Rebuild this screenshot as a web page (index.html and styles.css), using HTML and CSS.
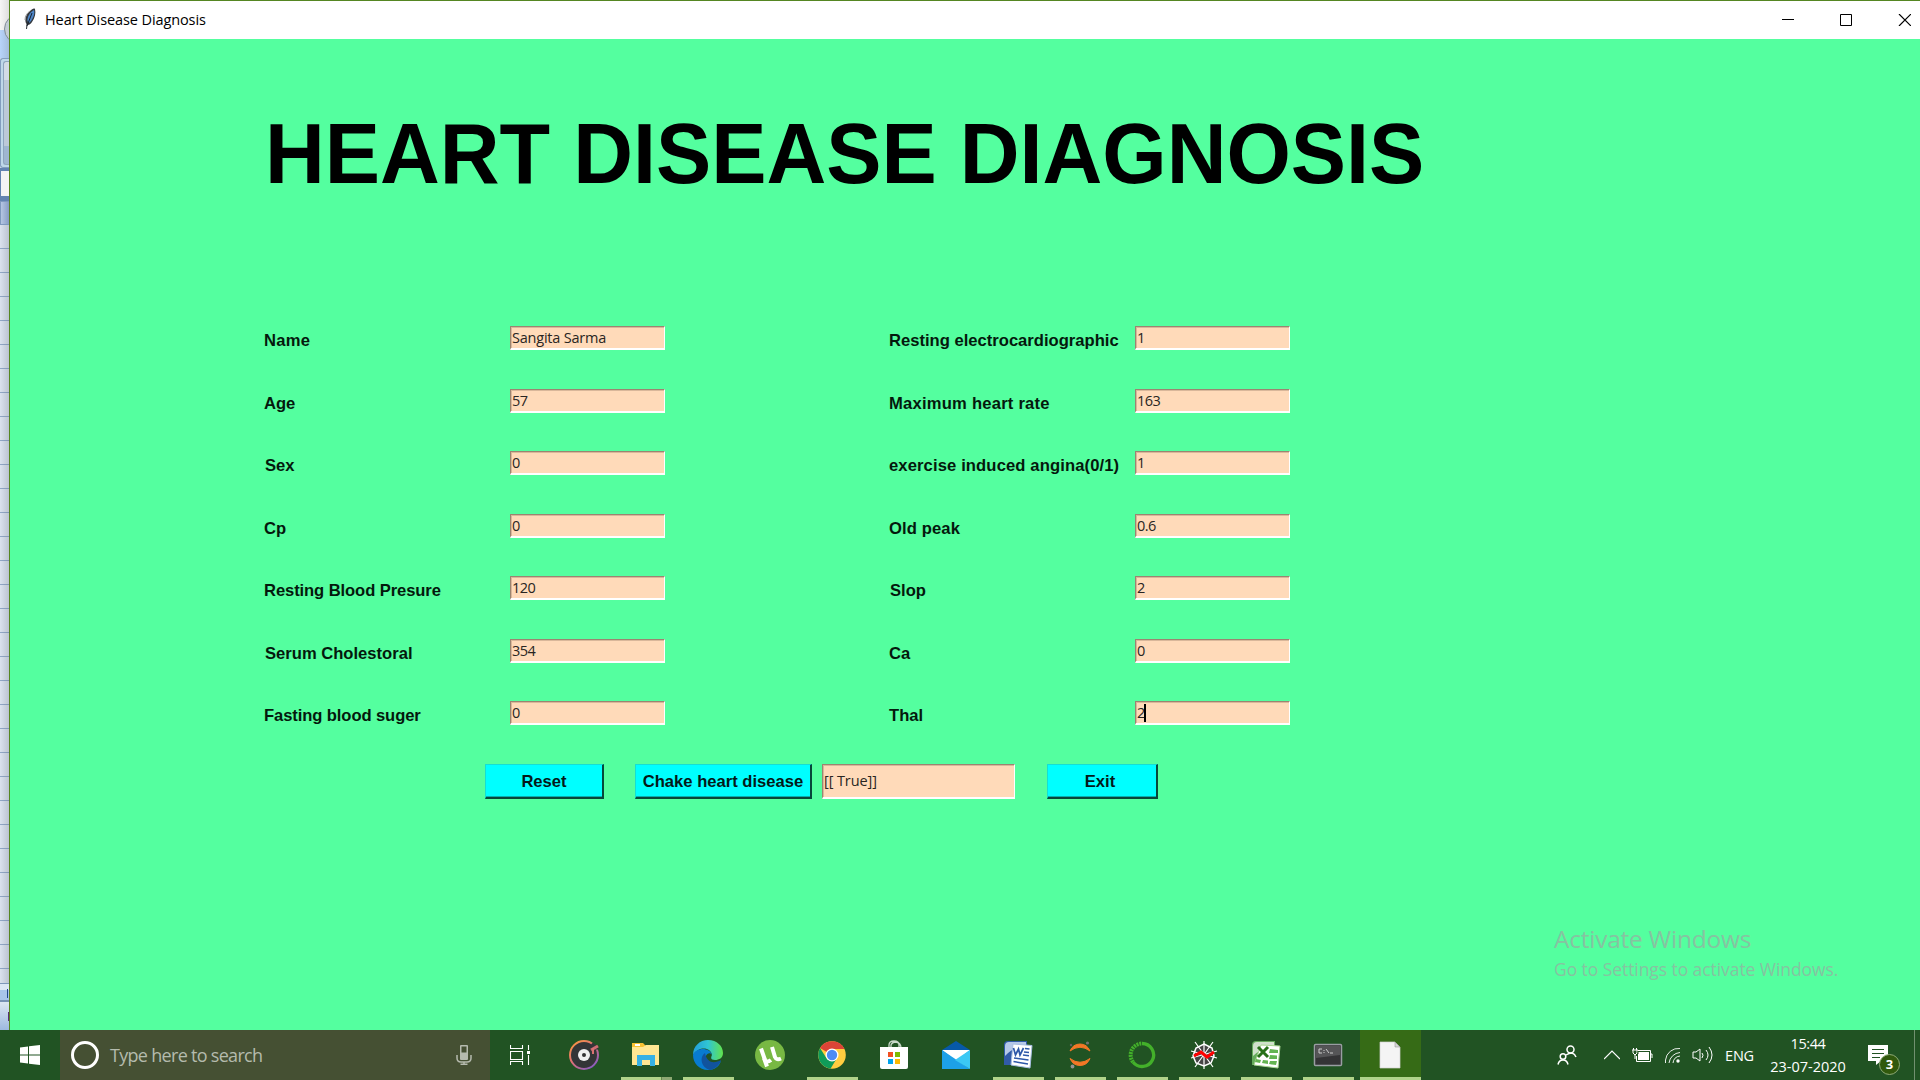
FILE: index.html
```html
<!DOCTYPE html>
<html lang="en">
<head>
<meta charset="utf-8">
<title>Heart Disease Diagnosis</title>
<link rel="stylesheet" href="styles.css">
</head>
<body>
<div class="desktop">
  <div class="workspace">
    <div class="behind">
      <div class="behind-caption"><span class="orb"></span></div>
      <div class="behind-tabs"></div>
      <div class="behind-ribbon"><span class="behind-group"></span></div>
      <div class="behind-formula"></div>
      <div class="behind-corner"></div>
      <div class="behind-rows"></div>
      <div class="behind-sheets"><span class="mark-blue"></span></div>
      <div class="behind-status"><span class="mark-purple"></span></div>
    </div>
    <main class="window">
      <header class="titlebar">
        <svg class="feather" viewBox="0 0 14 22"><path d="M3 21L3.500 16C1 12 3 6 7 3C9 1 11 0 12 1C13 5 12 10 9 14C7 17 5 17 4.500 17L4 21Z" fill="#34383d"/><path d="M4.500 13C4 9 7 4 11 2C12 6 10 10 8 13L6 15Z" fill="#4d86c9"/><path d="M9 5L4 18" stroke="#16202c" stroke-width="1" fill="none"/><path d="M2 12C2 8 4 5 7 3" stroke="#999" fill="none"/></svg>
        <span class="title">Heart Disease Diagnosis</span>
        <svg class="controls" viewBox="0 0 129 12"><path d="M0 5.500H12M58.500 .5H69.500V11.500H58.500Z" fill="none" stroke="#000"/><path d="M117 0L129 12M129 0L117 12" fill="none" stroke="#000" stroke-width="1.200"/></svg>
      </header>
      <section class="client">
        <h1 class="heading">HEART DISEASE DIAGNOSIS</h1>
        <div class="form">
          <span class="label wide">Name</span><span class="entry words">Sangita Sarma</span><span class="label">Resting electrocardiographic</span><span class="entry">1</span>
          <span class="label">Age</span><span class="entry">57</span><span class="label wide">Maximum heart rate</span><span class="entry">163</span>
          <span class="label inset">Sex</span><span class="entry">0</span><span class="label roomy">exercise induced angina(0/1)</span><span class="entry">1</span>
          <span class="label">Cp</span><span class="entry">0</span><span class="label roomy">Old peak</span><span class="entry">0.6</span>
          <span class="label tight">Resting Blood Presure</span><span class="entry">120</span><span class="label inset">Slop</span><span class="entry">2</span>
          <span class="label inset">Serum Cholestoral</span><span class="entry">354</span><span class="label">Ca</span><span class="entry">0</span>
          <span class="label tight">Fasting blood suger</span><span class="entry">0</span><span class="label">Thal</span><span class="entry">2<i class="caret"></i></span>
        </div>
        <div class="actions">
          <span class="button reset">Reset</span>
          <span class="button check">Chake heart disease</span>
          <span class="entry result">[[ True]]</span>
          <span class="button exit">Exit</span>
        </div>
        <aside class="watermark"><div class="wm-title">Activate Windows</div><div class="wm-text">Go to Settings to activate Windows.</div></aside>
      </section>
    </main>
  </div>

  <footer class="taskbar">
    <div class="start"><svg width="20" height="20" viewBox="0 0 20 20"><path fill="#fff" d="M0 2.600L8 1.500V9.500H0ZM9 1.300L20 0V9.500H9ZM0 10.500H8V18.500L0 17.400ZM9 10.500H20V20L9 18.700Z"/></svg></div>
    <div class="search">
      <span class="ring"></span><span class="placeholder">Type here to search</span>
      <svg class="mic" width="16" height="20" viewBox="0 0 16 20"><rect x="4" y="0" width="8" height="15" rx="1" fill="#b5baae"/><rect x="5.500" y="1.500" width="5" height="6" fill="#454f33"/><path d="M1 10V13Q1 17 5 17H11Q15 17 15 13V10M8 17V19.500M4.500 19.300H11.500" fill="none" stroke="#b5baae" stroke-width="1.500"/></svg>
    </div>
    <div class="taskview"><svg width="20" height="20" viewBox="0 0 20 20"><path d="M.5 0V3.500H12.500V0M.5 20V16.500H12.500V20M.5 6.500H12.500V14.500H.5ZM18.500 0V5M18.500 10V20" fill="none" stroke="#fff" stroke-width="1.100"/><rect x="17" y="6" width="3" height="3" fill="#fff"/></svg></div>
    <div class="apps">
      <div class="app"><svg viewBox="0 0 30 30"><defs><linearGradient id="gr" x1="0" y1="0" x2=".8" y2="1"><stop offset="0" stop-color="#ff9b38"/><stop offset=".5" stop-color="#dc7078"/><stop offset="1" stop-color="#845bc2"/></linearGradient></defs><circle cx="15" cy="15" r="14" fill="#333537" stroke="url(#gr)" stroke-width="2"/><path d="M23 3.500L29 9" stroke="#333537" stroke-width="3"/><path d="M22 10L29 6" stroke="#cf6d73" stroke-width="3"/><path d="M24 8V14" stroke="#d97272" stroke-width="2"/><circle cx="15" cy="15" r="6" fill="#f0f0f0"/><circle cx="15" cy="15" r="2" fill="#333"/></svg></div>
      <div class="app run multi"><svg viewBox="0 0 30 30"><path d="M1 3H12L15 6H28V25H1Z" fill="#f7c234"/><path d="M1 7H12L15 5H28V25H1Z" fill="#ffe793"/><path d="M4 4H9V6H4Z" fill="#fff"/><path d="M6 15H24V26H19V20H11V26H6Z" fill="#36b1e5"/></svg></div>
      <div class="app run"><svg viewBox="0 0 30 30"><defs><linearGradient id="e1"><stop offset="0" stop-color="#229dd9"/><stop offset=".5" stop-color="#30c5d3"/><stop offset="1" stop-color="#62e34c"/></linearGradient></defs><path d="M0 15C0 6 7 0 15 0C24 0 30 6 30 13C30 18 26 20 22 20C17 20 18 17 19 15C18 8 7 5 0 15Z" fill="url(#e1)"/><path d="M0 15C3 7 17 7 19 15C16 10 10 17 13 22C16 26 23 26 28 21C26 27 21 30 15 30C6 30 0 23 0 15Z" fill="#087bd0"/><path d="M12 13C6 17 8 28 17 30C22 29 27 25 28 20C21 24 14 23 12 13Z" fill="#11539d"/></svg></div>
      <div class="app"><svg viewBox="0 0 30 30"><circle cx="15" cy="15" r="15" fill="#78b843"/><path d="M6 8.500L10 20Q12 23 16 20" fill="none" stroke="#fff" stroke-width="4"/><path d="M9 18L12 26.500M17 7L20 17Q21.500 20.500 26 18.500" fill="none" stroke="#fff" stroke-width="4"/></svg></div>
      <div class="app run"><svg viewBox="0 0 30 30"><circle cx="15" cy="15" r="13.800" fill="#ffcd40"/><path d="M15 15L3 8A14 14 0 0 1 27.500 9H15Z" fill="#db4437"/><path d="M3 8A14 14 0 0 0 13.500 28.700L20 18L10 19Z" fill="#109b59"/><circle cx="15" cy="15" r="6.500" fill="#fff"/><circle cx="15" cy="15" r="5.200" fill="#4c8bf5"/></svg></div>
      <div class="app"><svg viewBox="0 0 30 30"><path d="M10 8V5Q10 1 15 1Q20 1 20 5V8M12 8V5Q13 2 17 2Q22 3 22 8" fill="none" stroke="#c9d8c9" stroke-width="1.300"/><path d="M1 7H29V27Q29 29 27 29H3Q1 29 1 27Z" fill="#fff"/><path d="M9 12H14V17H9Z" fill="#f25022"/><path d="M16 12H21V17H16Z" fill="#7fba00"/><path d="M9 19H14V24H9Z" fill="#00a4ef"/><path d="M16 19H21V24H16Z" fill="#ffb900"/></svg></div>
      <div class="app"><svg viewBox="0 0 30 30"><path d="M1 10L15 1L29 10V20H1Z" fill="#0759a8"/><path d="M1 10H29L15 21Z" fill="#fff"/><path d="M1 10L29 29H1Z" fill="#1da1e8"/><path d="M29 10V29L14 20Z" fill="#3bc8f4"/></svg></div>
      <div class="app run"><svg viewBox="0 0 30 30"><path d="M5 1H24V25H1V5Q1 1 5 1Z" fill="#315ba8"/><path d="M6 2H23V6Q10 7 2 16V6Q2 2 6 2Z" fill="#b5c8e8"/><path d="M10 4L29 5.500L27 28L8 25Z" fill="#fff" stroke="#a7bde0"/><path d="M10.500 8L12.500 15L15.500 9L17 15L20.500 8" fill="none" stroke="#2e58a8" stroke-width="1.700"/><path d="M22 8.500L26.500 9M21 12L26 12.500M20 15L26 15.800M11 18L25.500 20M10.500 21.500L25 24" stroke="#2e58a8" stroke-width="1.500"/></svg></div>
      <div class="app run"><svg viewBox="0 0 30 30"><path d="M5 11Q8 4 15 4Q22 4 25 11Q15 3.500 5 11ZM5 18.500Q8 25.500 15 25.500Q22 25.500 25 18.500Q15 26 5 18.500Z" fill="#f37726" stroke="#f37726" stroke-width="1"/><circle cx="22.500" cy="3" r="1.600" fill="#717371"/><circle cx="7.500" cy="26.500" r="1.900" fill="#929292"/><circle cx="6" cy="5" r="1.200" fill="#616262"/></svg></div>
      <div class="app run"><svg viewBox="0 0 30 30"><path d="M15 3.500A11.500 11.500 0 1 1 6 22" fill="none" stroke="#43b02a" stroke-width="3.300"/><path d="M6 22A11.500 11.500 0 0 1 15 3.500" fill="none" stroke="#43b02a" stroke-width="4" stroke-dasharray="2 .8"/></svg></div>
      <div class="app run"><svg viewBox="0 0 30 30"><path d="M15 4L23 8L25 16L22 23L15 26L7 23L4 16L7 8Z" fill="#444" stroke="#fff" stroke-width="1.500"/><path d="M15 1V29M6 2L24 27M24 2L6 27M2 11L28 18M28 11L2 18" fill="none" stroke="#fff" stroke-width="1.200"/><path d="M5 16L12 12L18 17L25 12" fill="none" stroke="#f00" stroke-width="3"/></svg></div>
      <div class="app run"><svg viewBox="0 0 30 30"><path d="M5 1H24V25H1V5Q1 1 5 1Z" fill="#65ab5c"/><path d="M6 2H23V7Q10 8 2 16V6Q2 2 6 2Z" fill="#d0e1cb"/><path d="M10 5L29 6L27 28L3 25Z" fill="#fff" stroke="#a6d590"/><path d="M7 7L17 17M17 7L7 17" stroke="#287119" stroke-width="3"/><path d="M19 9L27 10V13H18ZM19 15L26 15.500V19H18ZM12 20L17 20.500V24L11 23ZM19 21H26L25 25L18 24ZM5 19L10 20L9 23L4 22Z" fill="#64b452"/></svg></div>
      <div class="app run"><svg viewBox="0 0 30 30"><rect x="1.500" y="4.500" width="27" height="21" rx="1" fill="#343436" stroke="#999da2" stroke-width="1.500"/><path d="M3 6H27V15L3 18Z" fill="#555557"/><path d="M9 9H6V13H9M11 10V11M11 12V13M13 9L16 13M17 13H20" stroke="#ccc" fill="none"/></svg></div>
      <div class="app run active"><svg viewBox="0 0 30 30"><path d="M5 2H20L25 7V28H5Z" fill="#f4f4f4" stroke="#d1d1d1" stroke-width=".7"/><path d="M20 2V7H25Z" fill="#d6d6d6" stroke="#888" stroke-width=".5"/></svg></div>
    </div>
    <div class="tray">
      <div class="t-people"><svg width="20" height="20" viewBox="0 0 20 20"><g fill="none" stroke="#fff" stroke-width="1.500"><circle cx="13.500" cy="4.500" r="3.500"/><circle cx="6" cy="11.500" r="2.800"/><path d="M1 19.500Q2 15 6 15Q10 15 11 19.500M9 10Q12 8 15 8Q18 9 19 12"/></g></svg></div>
      <div class="t-small"><svg width="16" height="10" viewBox="0 0 16 10"><path d="M0 9L8 1L16 9" fill="none" stroke="#fff" stroke-width="1.200"/></svg></div>
      <div class="t-small"><svg width="21" height="15" viewBox="0 0 21 15"><path d="M6 2.500H18.500V13.500H4.500V8M18.500 6H20V10" fill="none" stroke="#fff"/><path d="M6 4H17V12H6Z" fill="#fff"/><path d="M0 2H6M1 2V5L3 7L5 5V2M1.500 0V2M4.500 0V2M3 7V11" fill="none" stroke="#fff"/><path d="M6 3V6L4 7" fill="none" stroke="#215323"/></svg></div>
      <div class="t-small"><svg width="17" height="17" viewBox="0 0 17 17"><path d="M1.500 16V13A13 13 0 0 1 16 1.500M5 16A12 12 0 0 1 16 5.500M9 16A8 8 0 0 1 16 9" fill="none" stroke="#e8eee8"/><circle cx="14" cy="14" r="1.700" fill="#fff"/></svg></div>
      <div class="t-small"><svg width="21" height="19" viewBox="0 0 21 19"><path d="M1 6H4L8 3V15L4 12H1ZM10 7Q12 9 10 12M14 4Q18 9 14 14M17 1Q23 9 17 17" fill="none" stroke="#fff"/></svg></div>
      <div class="lang">ENG</div>
      <div class="clock"><span>15:44</span><span class="date">23-07-2020</span></div>
      <div class="notify"><svg width="20" height="20" viewBox="0 0 20 20"><path d="M0 0H20V16H13L8 20V16H0Z" fill="#fff"/><path d="M4 4.500H16M4 8.500H16M4 12.500H12" stroke="#215323"/></svg><b class="badge">3</b></div>
      <div class="peek"></div>
    </div>
  </footer>
</div>
</body>
</html>
```
FILE: styles.css
```css
* { box-sizing: border-box; }
body { margin: 0; overflow: hidden; }
.desktop { width: 1920px; height: 1080px; display: flex; flex-direction: column; font-family: "Open Sans", sans-serif; }
.workspace { display: flex; height: 1030px; }

/* Sliver of the spreadsheet behind the window */
.behind { width: 9px; display: flex; flex-direction: column; background: #d7dfeb; overflow: hidden; }
.behind-caption { height: 30px; background: linear-gradient(90deg, #f6f6f6, #dedede); position: relative; }
.orb { position: absolute; left: 4px; top: 14px; width: 30px; height: 30px; border: 1px solid #818c98; border-radius: 50%; background: #c4cdd6; }
.behind-tabs { height: 28px; background: linear-gradient(90deg, #b8d4fa, #a5bddc); }
.behind-ribbon { height: 110px; padding: 2px 0 2px 2px; border: 1px solid #839dbf; border-right: 0; border-radius: 3px 0 0 3px; background: #bfd8e9; display: flex; }
.behind-group { flex: 1; border: 1px solid #8fa5bd; border-right: 0; border-radius: 3px 0 0 3px; background: linear-gradient(#d3dbe6 0 18px, #bdc9d8 18px 84px, #9fb6d0 84px); }
.behind-formula { height: 33px; border: 1px solid #6283b1; border-width: 3px 0 5px 1px; background: #f4f4f4; }
.behind-corner { height: 24px; border: 1px solid #7f99bf; border-right: 0; background: linear-gradient(90deg, #b5c6e2, #879cc5); }
.behind-rows { height: 758px; background: linear-gradient(90deg, transparent, rgba(95,105,125,.25)), repeating-linear-gradient(#dbe2ee 0 23px, #91a7c7 23px 24px); }
.behind-sheets { height: 19px; border-top: 1px solid #7e98ba; border-bottom: 2px solid #7691b4; background: linear-gradient(#dce7f5 40%, #a8c4e9 40%); position: relative; }
.behind-status { flex: 1; background: linear-gradient(#dce6f2, #9db9df); position: relative; }
.mark-blue, .mark-purple { position: absolute; right: 1px; top: 5px; width: 1px; height: 9px; background: #20488b; }
.mark-purple { right: 0; top: 10px; background: #573079; }

.window { flex: 1; display: flex; flex-direction: column; border-left: 1px solid #558622; border-top: 1px solid #558622; background: #54ff9f; }
.titlebar { height: 38px; background: #fff; display: flex; align-items: center; padding: 0 9px 2px 13px; }
.feather { width: 14px; height: 22px; }
.title { margin-left: 8px; font-size: 14.5px; letter-spacing: -.1px; color: #000; white-space: nowrap; }
.controls { width: 129px; height: 12px; margin-left: auto; margin-top: 2px; }
.client { position: relative; flex: 1; font-family: "Liberation Sans", sans-serif; }
.heading { margin: 68px 0 0 255px; height: 96px; line-height: 96px; font-size: 82.800px; font-weight: bold; color: #000; white-space: nowrap; transform: scaleY(1.04); transform-origin: 0 76px; }
.form { margin: 123px 0 0 254px; display: grid; grid-template-columns: 246px 379px 246px 156px; grid-auto-rows: 62.5px; }
.label { padding-top: 5px; line-height: 20px; font-size: 16.600px; font-weight: bold; color: #04190d; white-space: nowrap; }
.label.inset { padding-left: 1px; }
.label.wide { letter-spacing: .22px; }
.label.roomy { letter-spacing: .12px; }
.label.tight { letter-spacing: -.1px; }
.entry { position: relative; width: 155px; height: 24px; padding-left: 1px; border: 1px solid; border-color: #9c8471 #fff #fff #9c8471; border-bottom-width: 2px; box-shadow: inset 1px 1px #d9b79a; background: #ffdab9; font-family: "Open Sans", sans-serif; font-size: 14.500px; line-height: 22px; letter-spacing: -.5px; color: #292522; white-space: pre; }
.entry.words { letter-spacing: -.22px; }
.caret { position: absolute; left: 8px; top: 2px; width: 2px; height: 18px; background: #000; }
.actions { margin: 0 0 0 475px; display: flex; }
.button { height: 35px; display: flex; align-items: center; justify-content: center; padding-top: 2px; background: #0ff; border: 1px solid; border-color: #15ded3 #07483a #07483a #15ded3; border-width: 1px 2px 2px 1px; box-shadow: inset 0 -1px #08aeb0; color: #041919; font-size: 16.600px; font-weight: bold; white-space: nowrap; }
.reset { width: 119px; }
.check { width: 177px; margin-left: 31px; }
.result { width: 193px; height: 35px; margin-left: 10px; line-height: 32px; letter-spacing: -.1px; }
.exit { width: 111px; margin-left: 32px; padding-right: 4px; }
.watermark { position: absolute; left: 1544px; top: 882px; font-family: "Open Sans", sans-serif; color: #86c3a1; white-space: nowrap; }
.wm-title { font-size: 24.500px; line-height: 36px; letter-spacing: -.25px; }
.wm-text { font-size: 17.500px; line-height: 24px; letter-spacing: -.07px; }

.taskbar { height: 50px; display: flex; background: #215323; color: #fff; }
.start { width: 60px; display: flex; align-items: center; justify-content: center; }
.search { width: 430px; background: #455033; display: flex; align-items: center; padding: 0 18px 0 11px; }
.ring { width: 28px; height: 28px; border: 3.500px solid #fff; border-radius: 50%; }
.placeholder { margin-left: 11px; font-size: 18px; letter-spacing: -.7px; color: #b4bbad; }
.mic { margin-left: auto; }
.taskview { width: 63px; padding-left: 20px; display: flex; align-items: center; }
.apps { display: flex; }
.app { position: relative; width: 62px; display: flex; align-items: center; justify-content: center; }
.app svg { width: 30px; height: 30px; }
.app.run::after { content: ""; position: absolute; left: 6px; bottom: 0; width: 51px; height: 3px; background: #b0d38a; }
.app.multi::after { background: linear-gradient(90deg, #b0d38a 40px, #65884c 40px 41px, #8da873 41px); }
.app.active { background: linear-gradient(90deg, transparent 1px, #366b16 1px); }
.app.active::after { left: 1px; width: 61px; }
.tray { flex: 1; display: flex; align-items: center; padding-left: 126px; }
.tray > div { display: flex; align-items: center; justify-content: center; }
.t-people { width: 40px; margin-right: 10px; }
.t-small { width: 30px; }
.lang { width: 45px; font-size: 14.500px; letter-spacing: -.2px; }
.tray > .clock { width: 92px; height: 50px; flex-direction: column; font-size: 14.500px; line-height: 23px; letter-spacing: -.4px; }
.date { letter-spacing: 0; }
.notify { position: relative; width: 48px; height: 50px; }
.badge { position: absolute; left: 25px; top: 24px; width: 21px; height: 21px; border: 1px solid #8eaa76; border-radius: 50%; background: #31590d; font-size: 13px; line-height: 19px; text-align: center; }
.peek { width: 1px; height: 50px; margin-left: auto; margin-right: 5px; background: #71906f; }
```
